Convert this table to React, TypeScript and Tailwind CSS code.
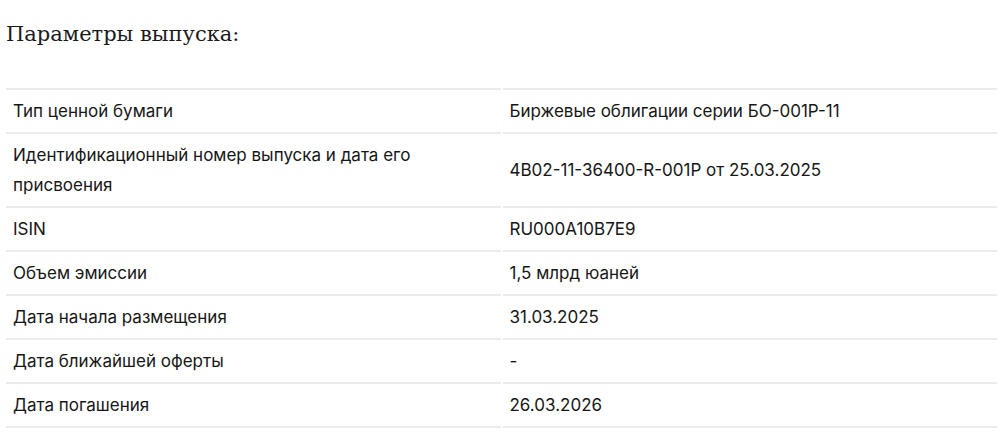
import React from "react";

const rows: [string, string][] = [
  ["Тип ценной бумаги", "Биржевые облигации серии БО-001Р-11"],
  ["Идентификационный номер выпуска и дата его присвоения", "4B02-11-36400-R-001P от 25.03.2025"],
  ["ISIN", "RU000A10B7E9"],
  ["Объем эмиссии", "1,5 млрд юаней"],
  ["Дата начала размещения", "31.03.2025"],
  ["Дата ближайшей оферты", "-"],
  ["Дата погашения", "26.03.2026"],
];

export default function App() {
  return (
    <div className="w-[1000px] h-[432px] bg-white pl-[6px] pr-[3px] overflow-hidden">
      {/* Title */}
      <h2 className="pt-[19px] text-[21px] leading-[30px] text-[#1b1b1b] font-['DejaVu_Serif',serif]">
        Параметры выпуска:
      </h2>
      {/* Params table */}
      <div className="mt-[39px] grid grid-cols-2 gap-x-[2px] font-['Inter',sans-serif] text-[17px] leading-[30px] text-[#161616]">
        {rows.map(([label, value], i) => (
          <React.Fragment key={label}>
            <div
              className={
                "border-b-2 border-[#ebebeb] pl-[7px] pr-[50px] py-[6px] " +
                (i === 0 ? "border-t-2" : "")
              }
            >
              {label}
            </div>
            <div
              className={
                "flex items-center border-b-2 border-[#ebebeb] px-[7px] py-[6px] " +
                (i === 0 ? "border-t-2" : "")
              }
            >
              {value}
            </div>
          </React.Fragment>
        ))}
      </div>
    </div>
  );
}
